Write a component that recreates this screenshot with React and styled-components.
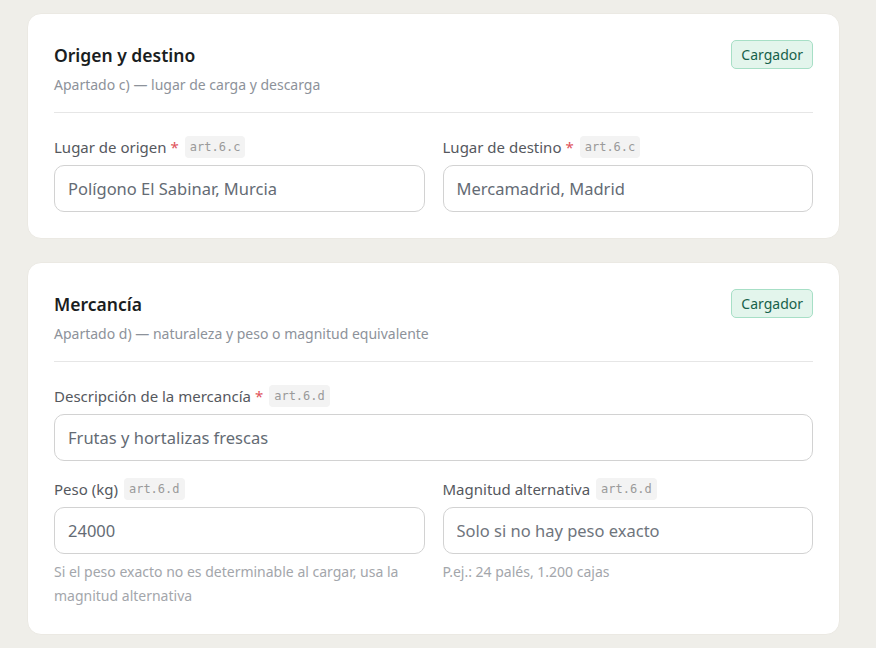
import styled, { createGlobalStyle } from 'styled-components';

const GlobalStyle = createGlobalStyle`
  html, body {
    margin: 0;
    padding: 0;
    background: #efeee9;
    font-family: 'Noto Sans', 'Open Sans', sans-serif;
  }
  * {
    box-sizing: border-box;
  }
`;

const Page = styled.div`
  width: 813px;
  margin-left: 27px;
  padding: 13px 0 14px;
  display: flex;
  flex-direction: column;
  gap: 23px;
`;

const Card = styled.section`
  background: #fff;
  border: 1px solid #ebe9e3;
  border-radius: 14px;
  padding: 27px 26px 26px;
`;

const CardHeader = styled.div`
  display: flex;
  justify-content: space-between;
  align-items: flex-start;
  padding-bottom: 17px;
  border-bottom: 1px solid #e6e6e6;
  margin-bottom: 23px;
`;

const Title = styled.h2`
  margin: 0;
  font-size: 17.5px;
  line-height: 28px;
  font-weight: 600;
  color: #1a1d21;
`;

const Subtitle = styled.p`
  margin: 6px 0 0;
  font-size: 14px;
  line-height: 20px;
  color: #8d929a;
`;

const Badge = styled.span`
  margin-top: -1px;
  padding: 3px 9px;
  font-size: 14px;
  line-height: 21px;
  color: #17614a;
  background: #e3f5ec;
  border: 1px solid #a7dfc6;
  border-radius: 5px;
`;

const Grid = styled.div`
  display: grid;
  grid-template-columns: 1fr 1fr;
  column-gap: 18px;
  row-gap: 17px;
`;

const Field = styled.div`
  grid-column: ${(p) => (p.$full ? '1 / -1' : 'auto')};
  display: flex;
  flex-direction: column;
`;

const LabelRow = styled.div`
  display: flex;
  align-items: center;
  gap: 6px;
  height: 22px;
  margin-bottom: 7px;
`;

const Label = styled.label`
  font-size: 15px;
  color: #55585e;
`;

const Required = styled.span`
  color: #e0525a;
  margin-left: 4px;
`;

const Code = styled.code`
  font-family: 'DejaVu Sans Mono', 'Liberation Mono', monospace;
  font-size: 12px;
  line-height: 22px;
  padding: 0 5px;
  color: #9a9a9a;
  background: #f3f3f3;
  border-radius: 4px;
`;

const Input = styled.input`
  width: 100%;
  height: 47px;
  padding: 0 13px;
  font-family: inherit;
  font-size: 16.5px;
  color: #646b74;
  border: 1px solid #d2d2d2;
  border-radius: 10px;
  background: #fff;
  outline: none;
  &::placeholder {
    color: #6f757d;
  }
`;

const Hint = styled.p`
  margin: 6px 0 0;
  font-size: 14px;
  line-height: 24px;
  color: #a3a6ab;
`;

function FormField({ label, code, required, value, placeholder, hint, full }) {
  return (
    <Field $full={full}>
      <LabelRow>
        <Label>
          {label}
          {required && <Required>*</Required>}
        </Label>
        <Code>{code}</Code>
      </LabelRow>
      <Input defaultValue={value} placeholder={placeholder} />
      {hint && <Hint>{hint}</Hint>}
    </Field>
  );
}

function Section({ title, subtitle, children }) {
  return (
    <Card>
      <CardHeader>
        <div>
          <Title>{title}</Title>
          <Subtitle>{subtitle}</Subtitle>
        </div>
        <Badge>Cargador</Badge>
      </CardHeader>
      <Grid>{children}</Grid>
    </Card>
  );
}

export default function App() {
  return (
    <>
      <GlobalStyle />
      <Page>
        <Section
          title="Origen y destino"
          subtitle="Apartado c) — lugar de carga y descarga"
        >
          <FormField
            label="Lugar de origen"
            code="art.6.c"
            required
            value="Polígono El Sabinar, Murcia"
          />
          <FormField
            label="Lugar de destino"
            code="art.6.c"
            required
            value="Mercamadrid, Madrid"
          />
        </Section>
        <Section
          title="Mercancía"
          subtitle="Apartado d) — naturaleza y peso o magnitud equivalente"
        >
          <FormField
            full
            label="Descripción de la mercancía"
            code="art.6.d"
            required
            value="Frutas y hortalizas frescas"
          />
          <FormField
            label="Peso (kg)"
            code="art.6.d"
            value="24000"
            hint="Si el peso exacto no es determinable al cargar, usa la magnitud alternativa"
          />
          <FormField
            label="Magnitud alternativa"
            code="art.6.d"
            placeholder="Solo si no hay peso exacto"
            hint="P.ej.: 24 palés, 1.200 cajas"
          />
        </Section>
      </Page>
    </>
  );
}
